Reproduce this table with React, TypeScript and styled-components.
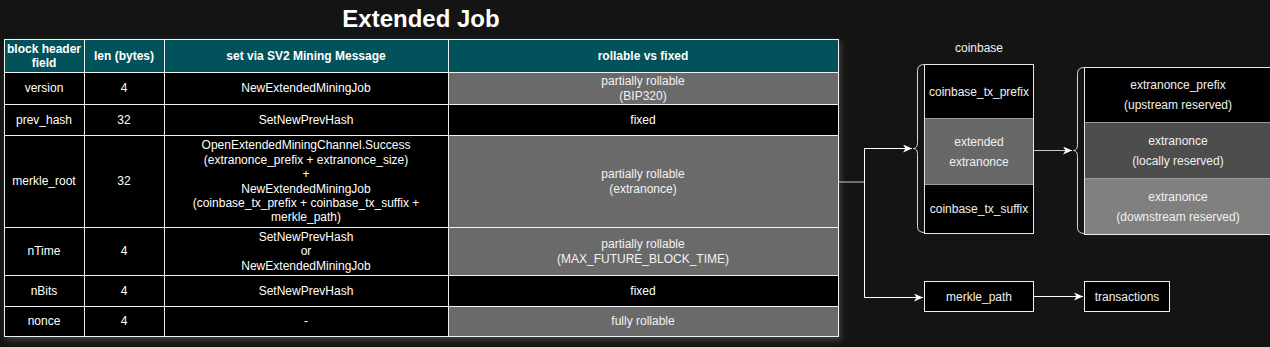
import React from "react";
import styled, { createGlobalStyle } from "styled-components";

const GlobalStyle = createGlobalStyle`
  body {
    margin: 0;
    background: #141414;
    font-family: "Liberation Sans", Arial, sans-serif;
    color: #fff;
  }
`;

const Page = styled.main`
  display: flex;
  align-items: flex-start;
  width: 1270px;
  height: 347px;
  padding-left: 4px;
  box-sizing: border-box;
  overflow: hidden;
`;

const LeftPanel = styled.section`
  display: flex;
  flex-direction: column;
  align-items: center;
  width: 834px;
`;

const Title = styled.h1`
  margin: 0 0 1px;
  height: 38px;
  line-height: 38px;
  font-size: 24px;
  font-weight: 700;
  color: #fff;
`;

const Table = styled.table`
  width: 834px;
  table-layout: fixed;
  border-collapse: collapse;
  border: 1px solid #f0f0f0;
  box-shadow: 2px 3px 6px rgba(110, 110, 110, 0.5);
  font-size: 12px;
  line-height: 14.4px;
`;

const Row = styled.tr<{ $h: number }>`
  height: ${(p) => p.$h}px;
`;

const HeadCell = styled.th`
  background: #01525a;
  color: #fff;
  font-weight: 700;
  border: 1px solid #f0f0f0;
  padding: 0 2px;
  text-align: center;
  vertical-align: middle;
`;

const Cell = styled.td<{ $tone?: "gray" | "black" }>`
  background: ${(p) => (p.$tone === "gray" ? "#6a6a6a" : "#000")};
  color: ${(p) => (p.$tone === "gray" ? "#f2f2f2" : "#fff")};
  border: 1px solid #f0f0f0;
  padding: 0 2px;
  text-align: center;
  vertical-align: middle;
`;

const Canvas = styled.section`
  position: relative;
  width: 432px;
  height: 347px;
  flex-shrink: 0;
  overflow: hidden;
`;

const Wires = styled.svg`
  position: absolute;
  left: 0;
  top: 0;
`;

const Label = styled.div<{ $x: number; $y: number; $w: number }>`
  position: absolute;
  left: ${(p) => p.$x}px;
  top: ${(p) => p.$y}px;
  width: ${(p) => p.$w}px;
  text-align: center;
  font-size: 12px;
  line-height: 16px;
  color: #f0f0f0;
`;

const Stack = styled.div<{ $x: number; $y: number; $w: number }>`
  position: absolute;
  left: ${(p) => p.$x}px;
  top: ${(p) => p.$y}px;
  width: ${(p) => p.$w}px;
  display: flex;
  flex-direction: column;
  border: 1px solid #e6e6e6;
  box-sizing: border-box;
`;

const Block = styled.div<{ $h: number; $bg: string }>`
  height: ${(p) => p.$h}px;
  box-sizing: border-box;
  background: ${(p) => p.$bg};
  display: flex;
  flex-direction: column;
  align-items: center;
  justify-content: center;
  font-size: 12px;
  line-height: 20px;
  color: #f0f0f0;
  & + & {
    border-top: 1px solid #9a9a9a;
  }
`;

const Node = styled.div<{ $x: number; $y: number; $w: number }>`
  position: absolute;
  left: ${(p) => p.$x}px;
  top: ${(p) => p.$y}px;
  width: ${(p) => p.$w}px;
  height: 31px;
  box-sizing: border-box;
  border: 1px solid #f0f0f0;
  background: #000;
  display: flex;
  align-items: center;
  justify-content: center;
  font-size: 12px;
  color: #f0f0f0;
`;

type Tone = "gray" | "black";

interface FieldRow {
  field: string;
  len: string;
  message: string[];
  rollable: string[];
  tone: Tone;
  height: number;
}

const rows: FieldRow[] = [
  { field: "version", len: "4", message: ["NewExtendedMiningJob"], rollable: ["partially rollable", "(BIP320)"], tone: "gray", height: 32 },
  { field: "prev_hash", len: "32", message: ["SetNewPrevHash"], rollable: ["fixed"], tone: "black", height: 31 },
  {
    field: "merkle_root",
    len: "32",
    message: [
      "OpenExtendedMiningChannel.Success",
      "(extranonce_prefix + extranonce_size)",
      "+",
      "NewExtendedMiningJob",
      "(coinbase_tx_prefix + coinbase_tx_suffix +",
      "merkle_path)",
    ],
    rollable: ["partially rollable", "(extranonce)"],
    tone: "gray",
    height: 92,
  },
  { field: "nTime", len: "4", message: ["SetNewPrevHash", "or", "NewExtendedMiningJob"], rollable: ["partially rollable", "(MAX_FUTURE_BLOCK_TIME)"], tone: "gray", height: 48 },
  { field: "nBits", len: "4", message: ["SetNewPrevHash"], rollable: ["fixed"], tone: "black", height: 31 },
  { field: "nonce", len: "4", message: ["-"], rollable: ["fully rollable"], tone: "gray", height: 30 },
];

const Lines: React.FC<{ lines: string[] }> = ({ lines }) => (
  <>
    {lines.map((l, i) => (
      <React.Fragment key={i}>
        {i > 0 && <br />}
        {l}
      </React.Fragment>
    ))}
  </>
);

const brace = (x: number, top: number, bottom: number, mid: number) =>
  `M${x + 9} ${top} Q${x + 2} ${top} ${x + 2} ${top + 6} V${mid - 6} Q${x + 2} ${mid} ${x - 2} ${mid} Q${x + 2} ${mid} ${x + 2} ${mid + 6} V${bottom - 6} Q${x + 2} ${bottom} ${x + 9} ${bottom}`;

const Diagram: React.FC = () => (
  <Canvas>
    <Wires width="432" height="347">
      <defs>
        <marker id="tip" markerWidth="10" markerHeight="8" refX="9" refY="4" orient="auto" markerUnits="userSpaceOnUse">
          <path d="M0 0 L9 4 L0 8 L2.5 4 Z" fill="#fff" />
        </marker>
      </defs>
      <g fill="none" strokeWidth="1">
        <path d="M0 182 H26.5" stroke="#c8c8c8" />
        <path d="M26.5 148.5 V297.5" stroke="#fff" />
        <path d="M26.5 148.5 H74" stroke="#fff" markerEnd="url(#tip)" />
        <path d="M26.5 297.5 H85" stroke="#fff" markerEnd="url(#tip)" />
        <path d="M196 150.5 H234" stroke="#c8c8c8" markerEnd="url(#tip)" />
        <path d="M196 296.5 H245" stroke="#fff" markerEnd="url(#tip)" />
        <path d={brace(77.5, 64.5, 232.5, 148.5)} stroke="#d8d8d8" />
        <path d={brace(237.5, 67.5, 233.5, 150.5)} stroke="#d8d8d8" />
      </g>
    </Wires>

    <Label $x={86} $y={40} $w={110}>coinbase</Label>

    <Stack $x={86} $y={64} $w={110}>
      <Block $h={53} $bg="#000">coinbase_tx_prefix</Block>
      <Block $h={66} $bg="#686868">
        <span>extended</span>
        <span>extranonce</span>
      </Block>
      <Block $h={49} $bg="#000">coinbase_tx_suffix</Block>
    </Stack>

    <Stack $x={246} $y={67} $w={188}>
      <Block $h={54} $bg="#000">
        <span>extranonce_prefix</span>
        <span>(upstream reserved)</span>
      </Block>
      <Block $h={56} $bg="#4d4d4d">
        <span>extranonce</span>
        <span>(locally reserved)</span>
      </Block>
      <Block $h={56} $bg="#808080">
        <span>extranonce</span>
        <span>(downstream reserved)</span>
      </Block>
    </Stack>

    <Node $x={86} $y={281} $w={110}>merkle_path</Node>
    <Node $x={246} $y={281} $w={86}>transactions</Node>
  </Canvas>
);

const App: React.FC = () => (
  <Page>
    <GlobalStyle />
    <LeftPanel>
      <Title>Extended Job</Title>
      <Table>
        <colgroup>
          <col style={{ width: 80 }} />
          <col style={{ width: 80 }} />
          <col style={{ width: 284 }} />
          <col style={{ width: 390 }} />
        </colgroup>
        <thead>
          <Row $h={33}>
            <HeadCell>block header field</HeadCell>
            <HeadCell>len (bytes)</HeadCell>
            <HeadCell>set via SV2 Mining Message</HeadCell>
            <HeadCell>rollable vs fixed</HeadCell>
          </Row>
        </thead>
        <tbody>
          {rows.map((r) => (
            <Row key={r.field} $h={r.height}>
              <Cell>{r.field}</Cell>
              <Cell>{r.len}</Cell>
              <Cell>
                <Lines lines={r.message} />
              </Cell>
              <Cell $tone={r.tone}>
                <Lines lines={r.rollable} />
              </Cell>
            </Row>
          ))}
        </tbody>
      </Table>
    </LeftPanel>
    <Diagram />
  </Page>
);

export default App;
